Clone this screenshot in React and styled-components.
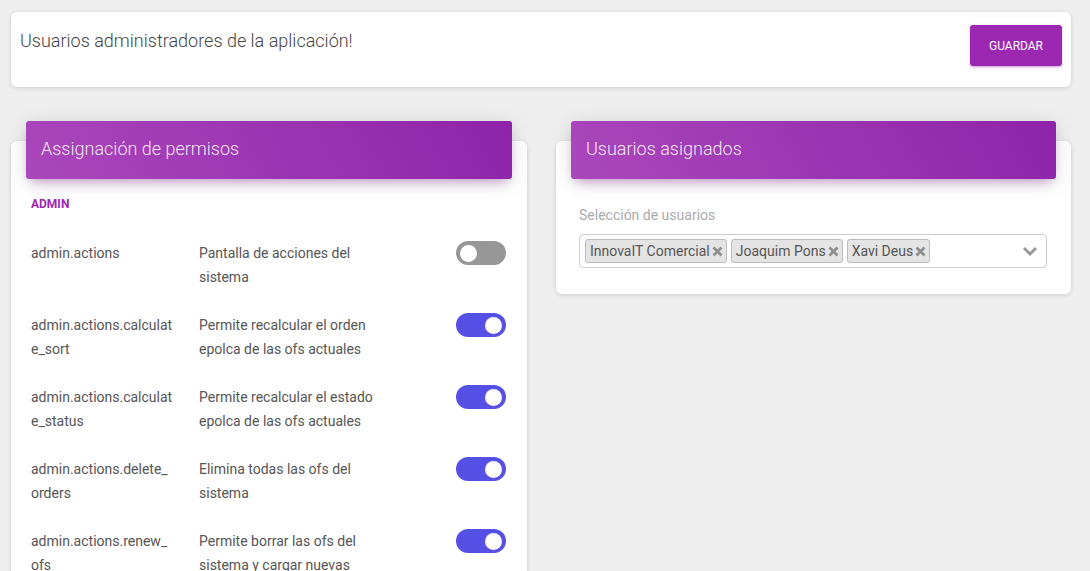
import React from "react";
import styled, { createGlobalStyle } from "styled-components";

const Global = createGlobalStyle`
  html, body { margin: 0; padding: 0; background: #eeeeee; overflow: hidden; }
  body { font-family: Roboto, "Liberation Sans", sans-serif; color: #555; }
  * { box-sizing: border-box; }
`;

const Page = styled.div`
  padding: 12px 19px 0 11px;
  width: 1090px;
  height: 571px;
  overflow: hidden;
`;

const TopCard = styled.div`
  background: #fff;
  border-radius: 6px;
  box-shadow: 0 1px 4px 0 rgba(0, 0, 0, 0.14);
  height: 75px;
  padding: 13px 9px 0 9px;
  display: flex;
  justify-content: space-between;
  align-items: flex-start;
`;

const PageTitle = styled.h3`
  margin: 2px 0 0 0;
  font-size: 18px;
  font-weight: 300;
  line-height: 27px;
  color: #444;
`;

const SaveButton = styled.button`
  width: 92px;
  height: 41px;
  border: none;
  border-radius: 3px;
  background: #9c27b0;
  color: #fff;
  font-family: Roboto, "Liberation Sans", sans-serif;
  font-size: 12px;
  font-weight: 400;
  text-transform: uppercase;
  box-shadow: 0 2px 2px 0 rgba(156, 39, 176, 0.14), 0 3px 1px -2px rgba(156, 39, 176, 0.2),
    0 1px 5px 0 rgba(156, 39, 176, 0.12);
  cursor: pointer;
`;

const Columns = styled.div`
  display: grid;
  grid-template-columns: 516px 515px;
  column-gap: 29px;
  align-items: start;
  margin-top: 54px;
`;

const Card = styled.div`
  background: #fff;
  border-radius: 6px;
  box-shadow: 0 1px 4px 0 rgba(0, 0, 0, 0.14);
  padding: ${(p) => p.$pad};
`;

const CardHeader = styled.div`
  margin: -20px 15px 0 15px;
  height: 58px;
  border-radius: 3px;
  background: linear-gradient(60deg, #ab47bc, #8e24aa);
  box-shadow: 0 4px 20px 0 rgba(0, 0, 0, 0.14), 0 7px 10px -5px rgba(156, 39, 176, 0.4);
  display: flex;
  align-items: center;
  padding: 0 15px 4px 15px;
`;

const CardTitle = styled.h4`
  margin: 0;
  font-size: 18px;
  font-weight: 300;
  color: rgba(255, 255, 255, 0.9);
`;

const CardBody = styled.div`
  padding: ${(p) => p.$pad};
`;

const Section = styled.div`
  font-size: 12px;
  font-weight: 700;
  color: #9c27b0;
  text-transform: uppercase;
  line-height: 14px;
  margin-bottom: 30px;
`;

const PermRow = styled.div`
  display: grid;
  grid-template-columns: 143px 180px 1fr;
  column-gap: 25px;
  margin-bottom: 24px;
  font-size: 14px;
  line-height: 24px;
  color: #555;
`;

const PermName = styled.div`
  word-break: break-all;
`;

const PermDesc = styled.div``;

const ToggleCell = styled.div`
  display: flex;
  justify-content: flex-end;
`;

const Toggle = styled.div`
  width: 50px;
  height: 24px;
  border-radius: 12px;
  background: ${(p) => (p.$on ? "#5551e6" : "#979797")};
  position: relative;
  &::after {
    content: "";
    position: absolute;
    top: 3.5px;
    left: ${(p) => (p.$on ? "29px" : "3.5px")};
    width: 17px;
    height: 17px;
    border-radius: 50%;
    background: #fff;
  }
`;

const FieldLabel = styled.div`
  font-size: 14px;
  color: #aaa;
  line-height: 20px;
  margin-bottom: 9px;
`;

const SelectBox = styled.div`
  height: 34px;
  border: 1px solid #ccc;
  border-radius: 4px;
  display: flex;
  align-items: center;
  padding: 0 5px;
`;

const Tags = styled.div`
  flex: 1;
  display: flex;
  gap: 4px;
`;

const Tag = styled.span`
  display: inline-flex;
  align-items: center;
  gap: 2px;
  height: 24px;
  padding: 0 3px 0 4px;
  background: #e4e4e4;
  border: 1px solid #bbb;
  border-radius: 3px;
  font-size: 14px;
  color: #555;
`;

const Chevron = styled.span`
  display: flex;
  align-items: center;
  margin-right: 3px;
`;

const Cross = () => (
  <svg width="11" height="11" viewBox="0 0 11 11">
    <path d="M1.5 1.5 L9.5 9.5 M9.5 1.5 L1.5 9.5" stroke="#8f8f8f" strokeWidth="2.8" strokeLinecap="butt" />
  </svg>
);

const ChevronDown = () => (
  <svg width="16" height="12" viewBox="0 0 16 12">
    <path d="M2 3 L8 9 L14 3" fill="none" stroke="#999" strokeWidth="3" strokeLinejoin="miter" />
  </svg>
);

const perms = [
  { name: "admin.actions", desc: "Pantalla de acciones del sistema", on: false },
  { name: "admin.actions.calculate_sort", desc: "Permite recalcular el orden epolca de las ofs actuales", on: true },
  { name: "admin.actions.calculate_status", desc: "Permite recalcular el estado epolca de las ofs actuales", on: true },
  { name: "admin.actions.delete_orders", desc: "Elimina todas las ofs del sistema", on: true },
  { name: "admin.actions.renew_ofs", desc: "Permite borrar las ofs del sistema y cargar nuevas", on: true },
  { name: "admin.actions.users", desc: "Gestión de usuarios del sistema", on: true },
];

const users = ["InnovaIT Comercial", "Joaquim Pons", "Xavi Deus"];

export default function App() {
  return (
    <>
      <Global />
      <Page>
        <TopCard>
          <PageTitle>Usuarios administradores de la aplicación!</PageTitle>
          <SaveButton>Guardar</SaveButton>
        </TopCard>
        <Columns>
          <Card $pad="0 0 20px 0">
            <CardHeader>
              <CardTitle>Assignación de permisos</CardTitle>
            </CardHeader>
            <CardBody $pad="18px 21px 0 20px">
              <Section>Admin</Section>
              {perms.map((p) => (
                <PermRow key={p.name}>
                  <PermName>{p.name}</PermName>
                  <PermDesc>{p.desc}</PermDesc>
                  <ToggleCell>
                    <Toggle $on={p.on} />
                  </ToggleCell>
                </PermRow>
              ))}
            </CardBody>
          </Card>
          <Card $pad="0 0 26px 0">
            <CardHeader>
              <CardTitle>Usuarios asignados</CardTitle>
            </CardHeader>
            <CardBody $pad="26px 24px 0 23px">
              <FieldLabel>Selección de usuarios</FieldLabel>
              <SelectBox>
                <Tags>
                  {users.map((u) => (
                    <Tag key={u}>
                      {u}
                      <Cross />
                    </Tag>
                  ))}
                </Tags>
                <Chevron>
                  <ChevronDown />
                </Chevron>
              </SelectBox>
            </CardBody>
          </Card>
        </Columns>
      </Page>
    </>
  );
}
